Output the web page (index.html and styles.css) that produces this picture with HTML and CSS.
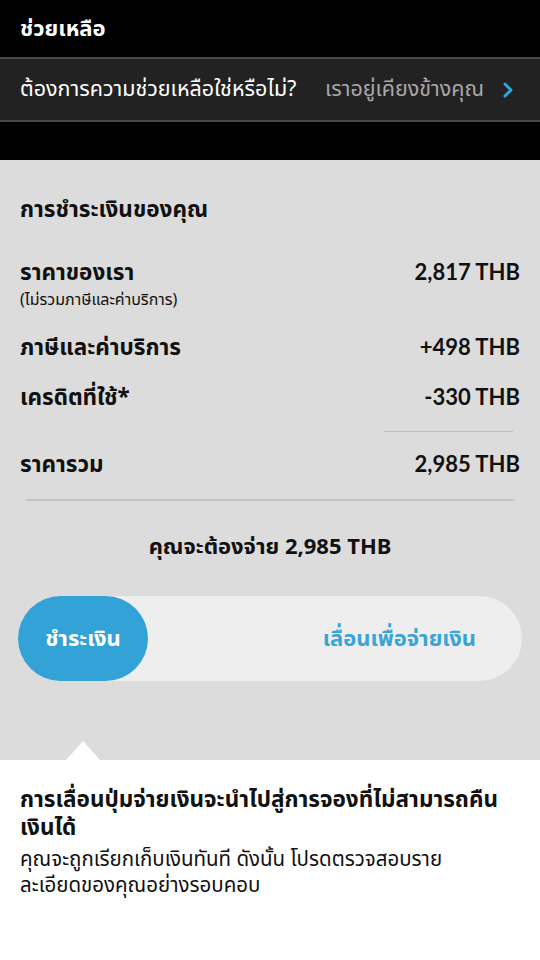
FILE: index.html
```html
<!DOCTYPE html>
<html lang="th">
<head>
<meta charset="UTF-8" />
<meta name="viewport" content="width=device-width, initial-scale=1" />
<title>ช่วยเหลือ</title>
<link rel="stylesheet" href="styles.css">
</head>
<body>

<header class="topbar">
  <h1>ช่วยเหลือ</h1>
</header>

<a class="helpbar" href="#">
  <span class="help-q">ต้องการความช่วยเหลือใช่หรือไม่?</span>
  <span class="help-a">เราอยู่เคียงข้างคุณ</span>
  <svg class="chevron" width="12" height="18" viewBox="0 0 12 18">
    <path d="M3 3 L9 9 L3 15" fill="none" stroke="#29a8e0" stroke-width="3" stroke-linecap="round" stroke-linejoin="round"/>
  </svg>
</a>

<div class="spacer"></div>

<section class="payment">
  <h2>การชำระเงินของคุณ</h2>

  <div class="row first">
    <div class="label">ราคาของเรา<small>(ไม่รวมภาษีและค่าบริการ)</small></div>
    <div class="amount">2,817 THB</div>
  </div>
  <div class="row">
    <div class="label">ภาษีและค่าบริการ</div>
    <div class="amount">+498 THB</div>
  </div>
  <div class="row">
    <div class="label">เครดิตที่ใช้*</div>
    <div class="amount">-330 THB</div>
  </div>
  <hr class="short-line">
  <div class="row total">
    <div class="label">ราคารวม</div>
    <div class="amount">2,985 THB</div>
  </div>
  <hr class="full-line">

  <p class="to-pay">คุณจะต้องจ่าย 2,985 THB</p>

  <div class="slider">
    <button class="knob">ชำระเงิน</button>
    <span class="slide-hint">เลื่อนเพื่อจ่ายเงิน</span>
  </div>
</section>

<section class="notice">
  <h3>การเลื่อนปุ่มจ่ายเงินจะนำไปสู่การจองที่ไม่สามารถคืน<br>เงินได้</h3>
  <p>คุณจะถูกเรียกเก็บเงินทันที ดังนั้น โปรดตรวจสอบราย<br>ละเอียดของคุณอย่างรอบคอบ</p>
</section>

</body>
</html>
```

FILE: styles.css
```css
* {
  box-sizing: border-box;
}
body {
  margin: 0;
  width: 540px;
  height: 960px;
  background: #fff;
  font-family: "Noto Sans", "Noto Sans Thai", Roboto, sans-serif;
  color: #111;
  overflow: hidden;
}
.topbar {
  background: #000;
  height: 57px;
  padding: 0 20px;
  display: flex;
  align-items: center;
}
.topbar h1 {
  margin: 0;
  color: #fff;
  font-size: 22px;
  font-weight: 700;
}
.helpbar {
  display: flex;
  align-items: center;
  height: 65px;
  padding: 0 26px 0 20px;
  background: #222;
  border-top: 2px solid #4a4a4a;
  border-bottom: 2px solid #4a4a4a;
  text-decoration: none;
}
.help-q {
  color: #fff;
  font-size: 21.5px;
}
.help-a {
  color: #a8a8a8;
  font-size: 21.5px;
  margin-left: auto;
}
.chevron {
  margin-left: 18px;
}
.spacer {
  background: #000;
  height: 38px;
}
.payment {
  background: #dcdcdc;
  padding: 31px 20px 0;
  height: 600px;
}
.payment h2 {
  margin: 0 0 29px;
  font-size: 22.5px;
  font-weight: 700;
  line-height: 36px;
}
.row {
  display: flex;
  justify-content: space-between;
  align-items: flex-start;
  font-size: 22.5px;
  font-weight: 700;
  line-height: 32px;
  margin-bottom: 18px;
}
.row.first {
  margin-bottom: 22px;
}
.row .label small {
  display: block;
  font-size: 16px;
  font-weight: 400;
  line-height: 20px;
  margin-top: 1px;
}
.amount {
  font-family: Lato, "Noto Sans", sans-serif;
  font-size: 22px;
  font-weight: 700;
}
.short-line {
  margin: 2px 7px 16px auto;
  width: 129px;
  border: 0;
  border-top: 1px solid #bdbdbd;
}
.row.total {
  margin-bottom: 19px;
}
.full-line {
  margin: 0 6px 28px;
  border: 0;
  border-top: 2px solid #c4c4c4;
}
.to-pay {
  margin: 0 0 35px;
  text-align: center;
  font-size: 22px;
  font-weight: 700;
  line-height: 32px;
}
.slider {
  margin: 0 -2px;
  height: 85px;
  border-radius: 43px;
  background: #eeeeee;
  display: flex;
  align-items: center;
}
.knob {
  width: 130px;
  height: 85px;
  border: none;
  border-radius: 43px;
  background: #33a2d6;
  color: #fff;
  font-family: inherit;
  font-size: 22px;
  font-weight: 700;
}
.slide-hint {
  margin-left: auto;
  margin-right: 46px;
  color: #3aa4d6;
  font-size: 22px;
  font-weight: 700;
}
.notice {
  position: relative;
  background: #fff;
  padding: 25px 20px;
}
.notice::before {
  content: "";
  position: absolute;
  left: 66px;
  top: -19px;
  border-left: 17px solid transparent;
  border-right: 17px solid transparent;
  border-bottom: 19px solid #fff;
}
.notice h3 {
  margin: 0 0 4px;
  font-size: 22.5px;
  font-weight: 700;
  line-height: 28px;
}
.notice p {
  margin: 0;
  font-size: 20.5px;
  line-height: 26px;
}
```
